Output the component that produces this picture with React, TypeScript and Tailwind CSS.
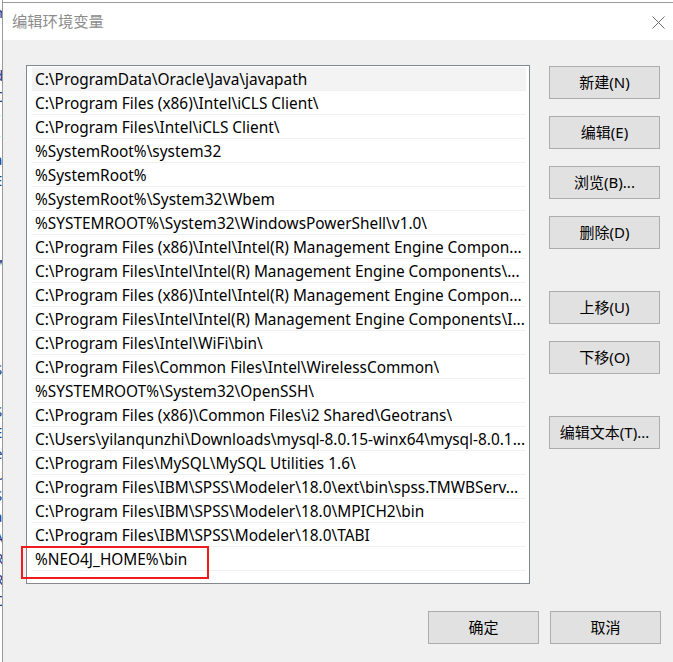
import React from 'react';

const paths = [
  'C:\\ProgramData\\Oracle\\Java\\javapath',
  'C:\\Program Files (x86)\\Intel\\iCLS Client\\',
  'C:\\Program Files\\Intel\\iCLS Client\\',
  '%SystemRoot%\\system32',
  '%SystemRoot%',
  '%SystemRoot%\\System32\\Wbem',
  '%SYSTEMROOT%\\System32\\WindowsPowerShell\\v1.0\\',
  'C:\\Program Files (x86)\\Intel\\Intel(R) Management Engine Compon...',
  'C:\\Program Files\\Intel\\Intel(R) Management Engine Components\\...',
  'C:\\Program Files (x86)\\Intel\\Intel(R) Management Engine Compon...',
  'C:\\Program Files\\Intel\\Intel(R) Management Engine Components\\I...',
  'C:\\Program Files\\Intel\\WiFi\\bin\\',
  'C:\\Program Files\\Common Files\\Intel\\WirelessCommon\\',
  '%SYSTEMROOT%\\System32\\OpenSSH\\',
  'C:\\Program Files (x86)\\Common Files\\i2 Shared\\Geotrans\\',
  'C:\\Users\\yilanqunzhi\\Downloads\\mysql-8.0.15-winx64\\mysql-8.0.1...',
  'C:\\Program Files\\MySQL\\MySQL Utilities 1.6\\',
  'C:\\Program Files\\IBM\\SPSS\\Modeler\\18.0\\ext\\bin\\spss.TMWBServ...',
  'C:\\Program Files\\IBM\\SPSS\\Modeler\\18.0\\MPICH2\\bin',
  'C:\\Program Files\\IBM\\SPSS\\Modeler\\18.0\\TABI',
  '%NEO4J_HOME%\\bin',
];

// fragments of the window behind the dialog
const behind = ['m', '', '', 'd', 'C', 'r', 'r', 'a', 'E', '', '', '', 'W', '', '', '', '', 'S', '', 'S', 'E', 'e', 'U', 'S', 'a', 'A', 'R', 'R', 'C'];

function Btn({ label, className = '' }: { label: string; className?: string }) {
  return (
    <button className={`flex h-[33px] w-[111px] items-center justify-center border border-[#adadad] bg-[#e1e1e1] text-[15px] text-black ${className}`}>
      {label}
    </button>
  );
}

export default function App() {
  const font = { fontFamily: '"Noto Sans", "Noto Sans CJK SC", sans-serif' };
  return (
    <div className="flex h-[662px] w-[673px] overflow-hidden bg-white" style={font}>
      {/* window behind */}
      <div className="w-[3px] shrink-0 overflow-hidden border-r border-[#9a9a9a] bg-white pt-[2px]">
        {behind.map((c, i) => (
          <div key={i} className="-ml-[6px] h-[21px] text-[15px] leading-[21px] text-[#1f3f8f]">{c}</div>
        ))}
      </div>

      <div className="flex flex-1 flex-col">
        <div className="h-[2px] bg-white" />
        <div className="flex flex-1 flex-col border-t border-[#9a9a9a]">
          {/* title bar */}
          <div className="flex h-[37px] items-center justify-between bg-white pl-[9px] pr-[8px]">
            <span className="text-[15.3px] text-[#8c8c8c]">编辑环境变量</span>
            <svg width="13" height="13" viewBox="0 0 13 13" className="mt-[2px]">
              <path d="M0.5 0.5 L12.5 12.5 M12.5 0.5 L0.5 12.5" stroke="#6b6b6b" strokeWidth="1" />
            </svg>
          </div>

          {/* body */}
          <div className="flex flex-1 flex-col bg-[#f0f0f0] pl-[23px] pt-[25px]">
            <div className="flex">
              <div className="h-[519px] w-[504px] border border-[#828790] bg-white pl-[5px] pr-[3px] pt-[1px]">
                {paths.map((p, i) => (
                  <div
                    key={i}
                    className={`relative flex h-[24px] items-center border-b border-[#f0f0f0] pl-[3px] pt-[2px] text-[15.4px] text-black ${i === 0 ? 'bg-[#f3f3f3]' : ''}`}
                  >
                    <span className="truncate whitespace-nowrap">{p}</span>
                    {i === paths.length - 1 && (
                      <div className="absolute -left-[11px] -top-[1px] h-[33px] w-[188px] border-[2.5px] border-[#f01c1c]" />
                    )}
                  </div>
                ))}
              </div>

              <div className="ml-[19px] flex flex-col pt-[1px]">
                <Btn label="新建(N)" />
                <Btn label="编辑(E)" className="mt-[17px]" />
                <Btn label="浏览(B)..." className="mt-[17px]" />
                <Btn label="删除(D)" className="mt-[17px]" />
                <Btn label="上移(U)" className="mt-[42px]" />
                <Btn label="下移(O)" className="mt-[17px]" />
                <Btn label="编辑文本(T)..." className="mt-[42px]" />
              </div>
            </div>

            <div className="mt-[27px] flex justify-end gap-[11px] pr-[12px]">
              <Btn label="确定" />
              <Btn label="取消" />
            </div>
          </div>
        </div>
      </div>
    </div>
  );
}
